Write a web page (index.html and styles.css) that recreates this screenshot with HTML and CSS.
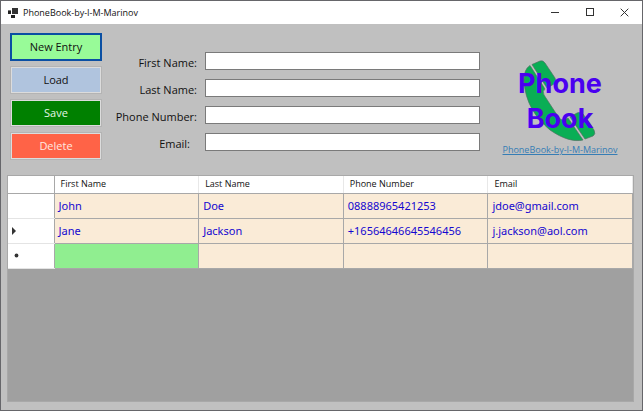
FILE: index.html
```html
<!DOCTYPE html>
<html lang="en">
<head>
<meta charset="utf-8">
<title>PhoneBook-by-I-M-Marinov</title>
<link rel="stylesheet" href="styles.css">
</head>
<body>
<div class="window">
  <header class="titlebar">
    <svg class="app-icon" width="10" height="10" viewBox="0 0 10 10" aria-hidden="true">
      <path fill="#333" d="M4 0h6v6H4z"/>
      <path fill="#777" d="M0 2h3v4H0z"/>
      <path fill="#222" d="M0 3h3v3H0zM3 7h4v3H3z"/>
    </svg>
    <h1 class="title">PhoneBook-by-I-M-Marinov</h1>
    <div class="window-controls">
      <button class="control" type="button" aria-label="Minimize"><svg width="9" height="9" viewBox="0 0 9 9"><path d="M1 4.5h8"/></svg></button>
      <button class="control" type="button" aria-label="Maximize"><svg width="9" height="9" viewBox="0 0 9 9"><rect x="1.5" y=".5" width="7" height="7"/></svg></button>
      <button class="control" type="button" aria-label="Close"><svg width="9" height="9" viewBox="0 0 9 9"><path d="M.7.7l7.6 7.6M8.3.7L.7 8.3"/></svg></button>
    </div>
  </header>
  <main class="content">
    <section class="top">
      <div class="actions">
        <button class="action new" type="button">New Entry</button>
        <button class="action load" type="button">Load</button>
        <button class="action save" type="button">Save</button>
        <button class="action delete" type="button">Delete</button>
      </div>
      <form class="fields">
        <label for="first">First Name:</label><input id="first" type="text">
        <label for="last">Last Name:</label><input id="last" type="text">
        <label for="phone">Phone Number:</label><input id="phone" type="text">
        <label class="short" for="email">Email:</label><input id="email" type="text">
      </form>
      <div class="brand">
        <svg class="logo" width="118" height="84" viewBox="0 0 118 84" role="img" aria-label="Phone Book">
          <g fill="#09ae55" stroke="#4f7161" stroke-width=".7" stroke-linejoin="round">
            <path d="M31 4.5L39 1Q42 0 44 3L54 18Q56 22 53 24L46 28z"/>
            <path d="M29 5.5Q23 9 23 20C24 43 35 58 49 70C62 79 73 82 82 80L67 58Q62 62 58 58L43 35Q41 31 44 29z"/>
            <path d="M69 57L76 53Q80 51 82 54L93 70Q95 74 92 76L84 79z"/>
          </g>
          <g class="logo-text">
            <text x="59" y="33">Phone</text>
            <text x="59" y="68">Book</text>
          </g>
        </svg>
        <a class="brand-link" href="#">PhoneBook-by-I-M-Marinov</a>
      </div>
    </section>
    <section class="grid">
      <table class="entries">
        <thead>
          <tr><th class="marker"></th><th>First Name</th><th>Last Name</th><th>Phone Number</th><th>Email</th></tr>
        </thead>
        <tbody>
          <tr><td class="marker"></td><td>John</td><td>Doe</td><td>08888965421253</td><td>jdoe@gmail.com</td></tr>
          <tr><td class="marker"><svg width="4" height="8" viewBox="0 0 4 8"><path d="M0 0l4 4-4 4z"/></svg></td><td>Jane</td><td>Jackson</td><td>+16564646645546456</td><td>j.jackson@aol.com</td></tr>
          <tr><td class="marker new-row"><svg width="5" height="5" viewBox="0 0 5 5"><circle cx="2.5" cy="2.5" r="1.9"/></svg></td><td class="current"></td><td></td><td></td><td></td></tr>
        </tbody>
      </table>
    </section>
  </main>
</div>
</body>
</html>
```

FILE: styles.css
```css
* { box-sizing: border-box; }

body {
  margin: 0;
  font-family: "Open Sans", "Noto Sans", sans-serif;
  font-size: 11px;
  color: #111;
}

.window {
  display: flex;
  flex-direction: column;
  min-height: 100vh;
  border: 1px solid #66666a;
  background: #c0c0c0;
}

.titlebar {
  display: flex;
  align-items: center;
  height: 23px;
  padding-left: 7px;
  background: #fff;
}

.title {
  flex: 1;
  margin: 0 0 0 5px;
  font-size: 9px;
  font-weight: 400;
  line-height: 16px;
}

.window-controls { display: flex; }

.control {
  display: flex;
  align-items: center;
  justify-content: center;
  width: 35px;
  height: 22px;
  padding: 0;
  border: 0;
  background: none;
}

.control svg {
  fill: none;
  stroke: #333;
  stroke-width: 1;
}

.content {
  display: flex;
  flex: 1;
  flex-direction: column;
  padding: 9px 8px 8px 6px;
}

.top {
  display: flex;
  height: 142px;
}

.actions {
  display: flex;
  flex-direction: column;
  gap: 5px;
  width: 92px;
  margin-left: 3px;
}

.action {
  height: 28px;
  padding: 0;
  border: 2px solid #dcdcdc;
  outline: 1px solid #b4b4b4;
  outline-offset: -1px;
  font-family: inherit;
  font-size: 11px;
  line-height: 16px;
  color: #111;
}

.new {
  border-color: #0a4fa3;
  outline: 0;
  background: #98fb98;
}

.load { background: #b0c4de; }
.save { background: #008000; color: #e4f5e4; }
.delete { background: #ff6347; color: #ffe8e0; }

.fields {
  display: grid;
  flex: 1;
  grid-template-columns: 95px 1fr;
  grid-auto-rows: 18px;
  gap: 9px 8px;
  align-content: start;
  padding-top: 19px;
}

.fields label {
  padding-top: 2px;
  font-size: 11px;
  line-height: 18px;
  text-align: right;
  white-space: nowrap;
}

.fields .short { padding-right: 7px; }

.fields input {
  width: 100%;
  min-width: 0;
  height: 18px;
  padding: 0 3px;
  border: 1px solid #7a7a7a;
  background: #fff;
  font: inherit;
}

.brand {
  display: flex;
  flex-direction: column;
  align-items: center;
  width: 120px;
  margin: 27px 14px 0 20px;
}

.logo-text {
  fill: #4a00f0;
  font-family: Inter, sans-serif;
  font-size: 27px;
  font-weight: 700;
  text-anchor: middle;
}

.brand-link {
  font-size: 9px;
  line-height: 12px;
  color: #367db5;
  white-space: nowrap;
}

.grid {
  flex: 1;
  border: 1px solid #a8a8a8;
  background: #a0a0a0;
}

.entries {
  width: 100%;
  border-collapse: collapse;
  table-layout: fixed;
}

.entries th {
  height: 17px;
  padding: 0 6px;
  border-right: 1px solid #e8e8e8;
  border-bottom: 1px solid #a8a8a8;
  background: #fff;
  font-size: 9px;
  font-weight: 400;
  line-height: 12px;
  text-align: left;
}

.entries td {
  height: 25px;
  padding: 0 4px;
  border-right: 1px solid #a8a8a8;
  border-bottom: 1px solid #a8a8a8;
  background: #faebd7;
  font-family: "Noto Sans", sans-serif;
  font-size: 11px;
  line-height: 16px;
  color: #1407d0;
}

.entries .marker {
  width: 46px;
  border-right-color: #a8a8a8;
  background: #fff;
}

.entries td.marker { border-bottom-color: #e4e4e4; }

.entries td.new-row { padding-left: 6px; }

.marker svg {
  display: block;
  fill: #333;
}

.entries .current { background: #90ee90; }
```
